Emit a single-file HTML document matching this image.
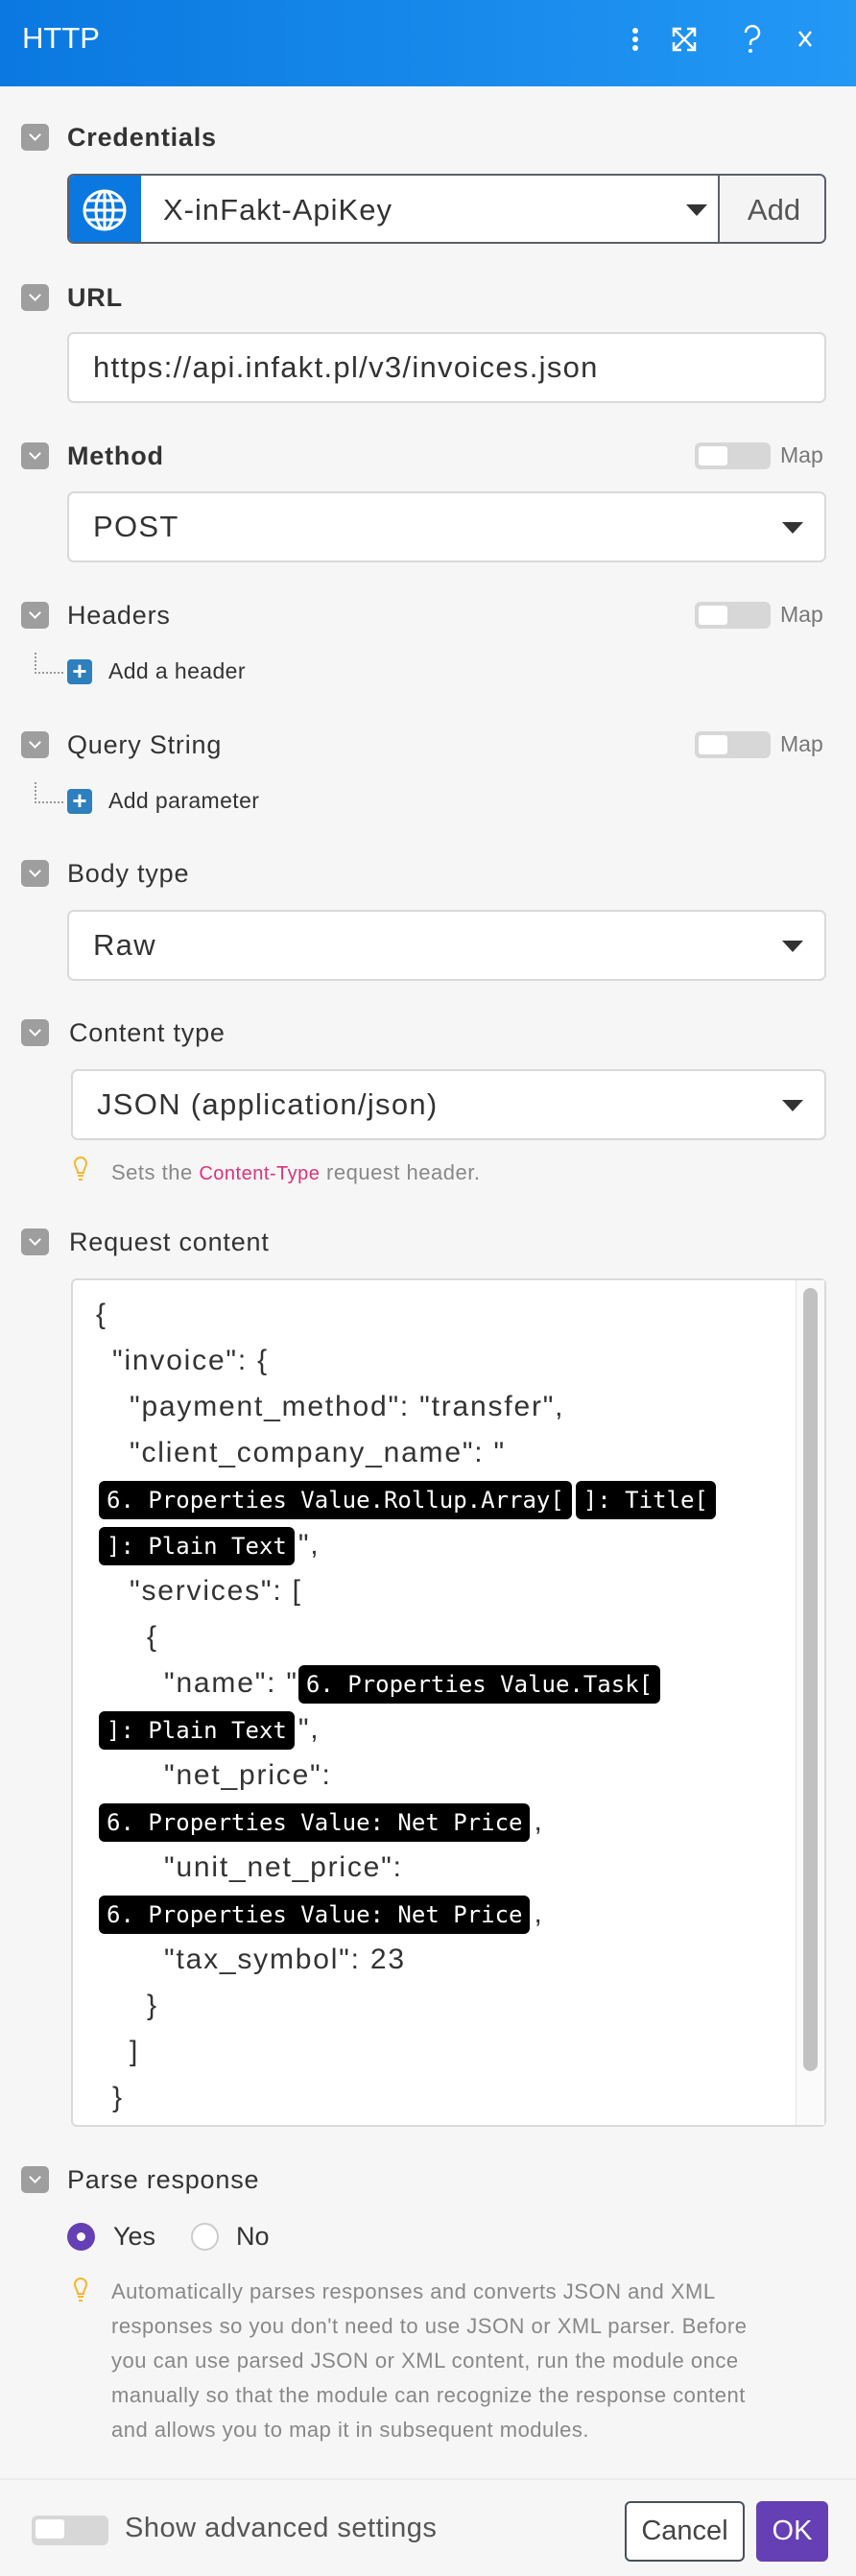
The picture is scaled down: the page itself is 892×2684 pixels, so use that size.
<!DOCTYPE html>
<html><head><meta charset="utf-8"><style>
*{box-sizing:border-box;margin:0;padding:0}
body{width:892px;height:2684px;background:#f6f6f6;font-family:"Liberation Sans",sans-serif;color:#333;position:relative;overflow:hidden}
.a{position:absolute}
.hdr{left:0;top:0;width:892px;height:90px;background:linear-gradient(90deg,#0a78e0,#2398f5)}
.cb{position:absolute;left:22px;width:29px;height:28px;background:#9e9e9e;border-radius:5px}
.cb:after{content:"";position:absolute;left:10px;top:7px;width:7px;height:7px;border-right:2px solid #fff;border-bottom:2px solid #fff;transform:rotate(45deg)}
.lbl{position:absolute;left:70px;font-size:27px;line-height:30px;letter-spacing:0.8px}
.b{font-weight:bold}
.inp{position:absolute;left:70px;width:791px;height:74px;background:#fff;border:2px solid #d9d9d9;border-radius:7px;font-size:31px;line-height:70px;padding-left:25px;letter-spacing:1.3px}
.arr{position:absolute;right:22px;top:30px;width:0;height:0;border-left:11px solid transparent;border-right:11px solid transparent;border-top:12px solid #333}
.tg{position:absolute;left:724px;width:79px;height:28px;background:#d7d7d7;border-radius:6px}
.tg:after{content:"";position:absolute;left:4px;top:4px;width:30px;height:20px;background:#fff;border-radius:3px}
.map{position:absolute;left:813px;font-size:23px;color:#777}
.plus{position:absolute;left:70px;width:26px;height:26px;background:#2d7fbd;border-radius:4px;color:#fff;font-size:26px;line-height:24px;text-align:center;font-weight:bold}
.dot{position:absolute;left:36px;width:30px;height:22px;border-left:2px dotted #999;border-bottom:2px dotted #999}
.sm{position:absolute;left:113px;font-size:23px;color:#333;letter-spacing:0.4px}
.code{position:absolute;left:74px;top:1332px;width:787px;height:884px;background:#fff;border:2px solid #d9d9d9;border-radius:6px}
.ln{position:absolute;left:100px;font-size:30px;line-height:48px;height:48px;white-space:nowrap;color:#333;letter-spacing:1.8px}
.p{display:inline-block;background:#000;color:#fff;font-family:"DejaVu Sans Mono",monospace;font-size:24px;letter-spacing:0;line-height:40px;height:40px;padding:0 8px;border-radius:6px;vertical-align:middle;margin-right:4px}
.hint{position:absolute;left:116px;font-size:22px;color:#888;line-height:36px;letter-spacing:0.5px;white-space:nowrap}
</style></head><body>
<div class="a hdr"></div>
<div class="a" style="left:23px;top:22px;font-size:31px;color:#fff">HTTP</div>
<svg class="a" style="left:650px;top:25px" width="220" height="40" viewBox="0 0 220 40">
<g fill="#fff"><circle cx="12" cy="7" r="3"/><circle cx="12" cy="16" r="3"/><circle cx="12" cy="25" r="3"/></g>
<g stroke="#fff" stroke-width="2.5" fill="none"><path d="M60 5h-8v8M52 5l22 22M74 19v8h-8M66 5h8v8M74 5L52 27M52 19v8h8"/>
<path d="M127 9a7 7 0 1 1 8 7c-3 1-3 3-3 6"/><path d="M183 8l12 15M195 8l-12 15"/></g>
<circle cx="132" cy="28" r="2" fill="#fff"/></svg>

<div class="cb" style="top:129px"></div><div class="lbl b" style="top:128px">Credentials</div>
<div class="a" style="left:70px;top:181px;width:791px;height:73px;background:#fff;border:2px solid #5a6068;border-radius:7px;overflow:hidden">
<div class="a" style="left:0;top:0;width:75px;height:71px;background:#0a78e0"></div>
<svg class="a" style="left:13px;top:13px" width="48" height="46" viewBox="0 0 48 46"><g fill="none" stroke="#fff" stroke-width="3"><ellipse cx="24" cy="23" rx="21" ry="20"/><ellipse cx="24" cy="23" rx="9" ry="20"/><path d="M24 3v40M3 23h42M6 13h36M6 33h36"/></g></svg>
<div class="a" style="left:98px;top:0;font-size:31px;line-height:71px;letter-spacing:1px">X-inFakt-ApiKey</div>
<div class="arr" style="right:122px"></div>
<div class="a" style="left:676px;top:0;width:115px;height:71px;background:#f4f4f4;border-left:2px solid #5a6068;font-size:31px;line-height:71px;text-align:center;color:#555">Add</div>
</div>

<div class="cb" style="top:296px"></div><div class="lbl b" style="top:295px">URL</div>
<div class="inp" style="top:346px">https://api.infakt.pl/v3/invoices.json</div>

<div class="cb" style="top:461px"></div><div class="lbl b" style="top:460px">Method</div>
<div class="tg" style="top:461px"></div><div class="map" style="top:461px">Map</div>
<div class="inp" style="top:512px">POST<div class="arr"></div></div>

<div class="cb" style="top:627px"></div><div class="lbl" style="top:626px">Headers</div>
<div class="tg" style="top:627px"></div><div class="map" style="top:627px">Map</div>
<div class="dot" style="top:680px"></div><div class="plus" style="top:687px">+</div><div class="sm" style="top:686px">Add a header</div>

<div class="cb" style="top:762px"></div><div class="lbl" style="top:761px">Query String</div>
<div class="tg" style="top:762px"></div><div class="map" style="top:762px">Map</div>
<div class="dot" style="top:815px"></div><div class="plus" style="top:822px">+</div><div class="sm" style="top:821px">Add parameter</div>

<div class="cb" style="top:896px"></div><div class="lbl" style="top:895px">Body type</div>
<div class="inp" style="top:948px">Raw<div class="arr"></div></div>

<div class="cb" style="top:1062px"></div><div class="lbl" style="left:72px;top:1061px">Content type</div>
<div class="inp" style="left:74px;width:787px;top:1114px">JSON (application/json)<div class="arr"></div></div>
<svg class="a" style="left:76px;top:1204px" width="16" height="28" viewBox="0 0 16 28"><path d="M8 2a6 6 0 0 0-6 6c0 4 3 6 3 10h6c0-4 3-6 3-10a6 6 0 0 0-6-6zM5 21h6M6 25h4" fill="none" stroke="#f5b82e" stroke-width="2"/></svg>
<div class="hint" style="top:1204px">Sets the <span style="color:#e0307a;font-size:20px">Content-Type</span> request header.</div>

<div class="cb" style="top:1280px"></div><div class="lbl" style="left:72px;top:1279px">Request content</div>
<div class="code">
<div class="a" style="right:0;top:0;width:30px;height:880px;border-left:1px solid #e4e4e4;background:#fafafa"></div>
<div class="a" style="right:7px;top:8px;width:15px;height:816px;background:#c1c1c1;border-radius:8px"></div>
</div>
<div class="ln" style="top:1346px">{</div>
<div class="ln" style="top:1394px;left:117px">"invoice": {</div>
<div class="ln" style="top:1442px;left:135px">"payment_method": "transfer",</div>
<div class="ln" style="top:1490px;left:135px">"client_company_name": "</div>
<div class="ln" style="top:1538px;left:103px"><span class="p">6. Properties Value.Rollup.Array[</span><span class="p">]: Title[</span></div>
<div class="ln" style="top:1586px;left:103px"><span class="p">]: Plain Text</span>",</div>
<div class="ln" style="top:1634px;left:135px">"services": [</div>
<div class="ln" style="top:1682px;left:153px">{</div>
<div class="ln" style="top:1730px;left:171px">"name": "<span class="p">6. Properties Value.Task[</span></div>
<div class="ln" style="top:1778px;left:103px"><span class="p">]: Plain Text</span>",</div>
<div class="ln" style="top:1826px;left:171px">"net_price":</div>
<div class="ln" style="top:1874px;left:103px"><span class="p">6. Properties Value: Net Price</span>,</div>
<div class="ln" style="top:1922px;left:171px">"unit_net_price":</div>
<div class="ln" style="top:1970px;left:103px"><span class="p">6. Properties Value: Net Price</span>,</div>
<div class="ln" style="top:2018px;left:171px">"tax_symbol": 23</div>
<div class="ln" style="top:2066px;left:153px">}</div>
<div class="ln" style="top:2114px;left:135px">]</div>
<div class="ln" style="top:2162px;left:117px">}</div>

<div class="cb" style="top:2257px"></div><div class="lbl" style="top:2256px">Parse response</div>
<div class="a" style="left:70px;top:2316px;width:29px;height:29px;border-radius:50%;background:#6540b4"></div>
<div class="a" style="left:80px;top:2326px;width:9px;height:9px;border-radius:50%;background:#fff"></div>
<div class="a" style="left:118px;top:2315px;font-size:27px">Yes</div>
<div class="a" style="left:199px;top:2316px;width:29px;height:29px;border-radius:50%;background:#fff;border:2px solid #ccc"></div>
<div class="a" style="left:246px;top:2315px;font-size:27px">No</div>
<svg class="a" style="left:76px;top:2372px" width="16" height="28" viewBox="0 0 16 28"><path d="M8 2a6 6 0 0 0-6 6c0 4 3 6 3 10h6c0-4 3-6 3-10a6 6 0 0 0-6-6zM5 21h6M6 25h4" fill="none" stroke="#f5b82e" stroke-width="2"/></svg>
<div class="hint" style="top:2370px">Automatically parses responses and converts JSON and XML<br>responses so you don't need to use JSON or XML parser. Before<br>you can use parsed JSON or XML content, run the module once<br>manually so that the module can recognize the response content<br>and allows you to map it in subsequent modules.</div>

<div class="a" style="left:0;top:2582px;width:892px;height:2px;background:#ebebeb"></div>
<div class="tg" style="left:33px;top:2621px;width:80px;height:31px"></div>
<div class="a" style="left:130px;top:2618px;font-size:29px;color:#555;letter-spacing:0.5px">Show advanced settings</div>
<div class="a" style="left:651px;top:2606px;width:125px;height:63px;border:2px solid #4a5058;border-radius:6px;background:#fff;font-size:29px;line-height:59px;text-align:center;color:#444">Cancel</div>
<div class="a" style="left:788px;top:2606px;width:75px;height:63px;border-radius:6px;background:#6540b4;font-size:29px;line-height:63px;text-align:center;color:#fff">OK</div>
</body></html>
